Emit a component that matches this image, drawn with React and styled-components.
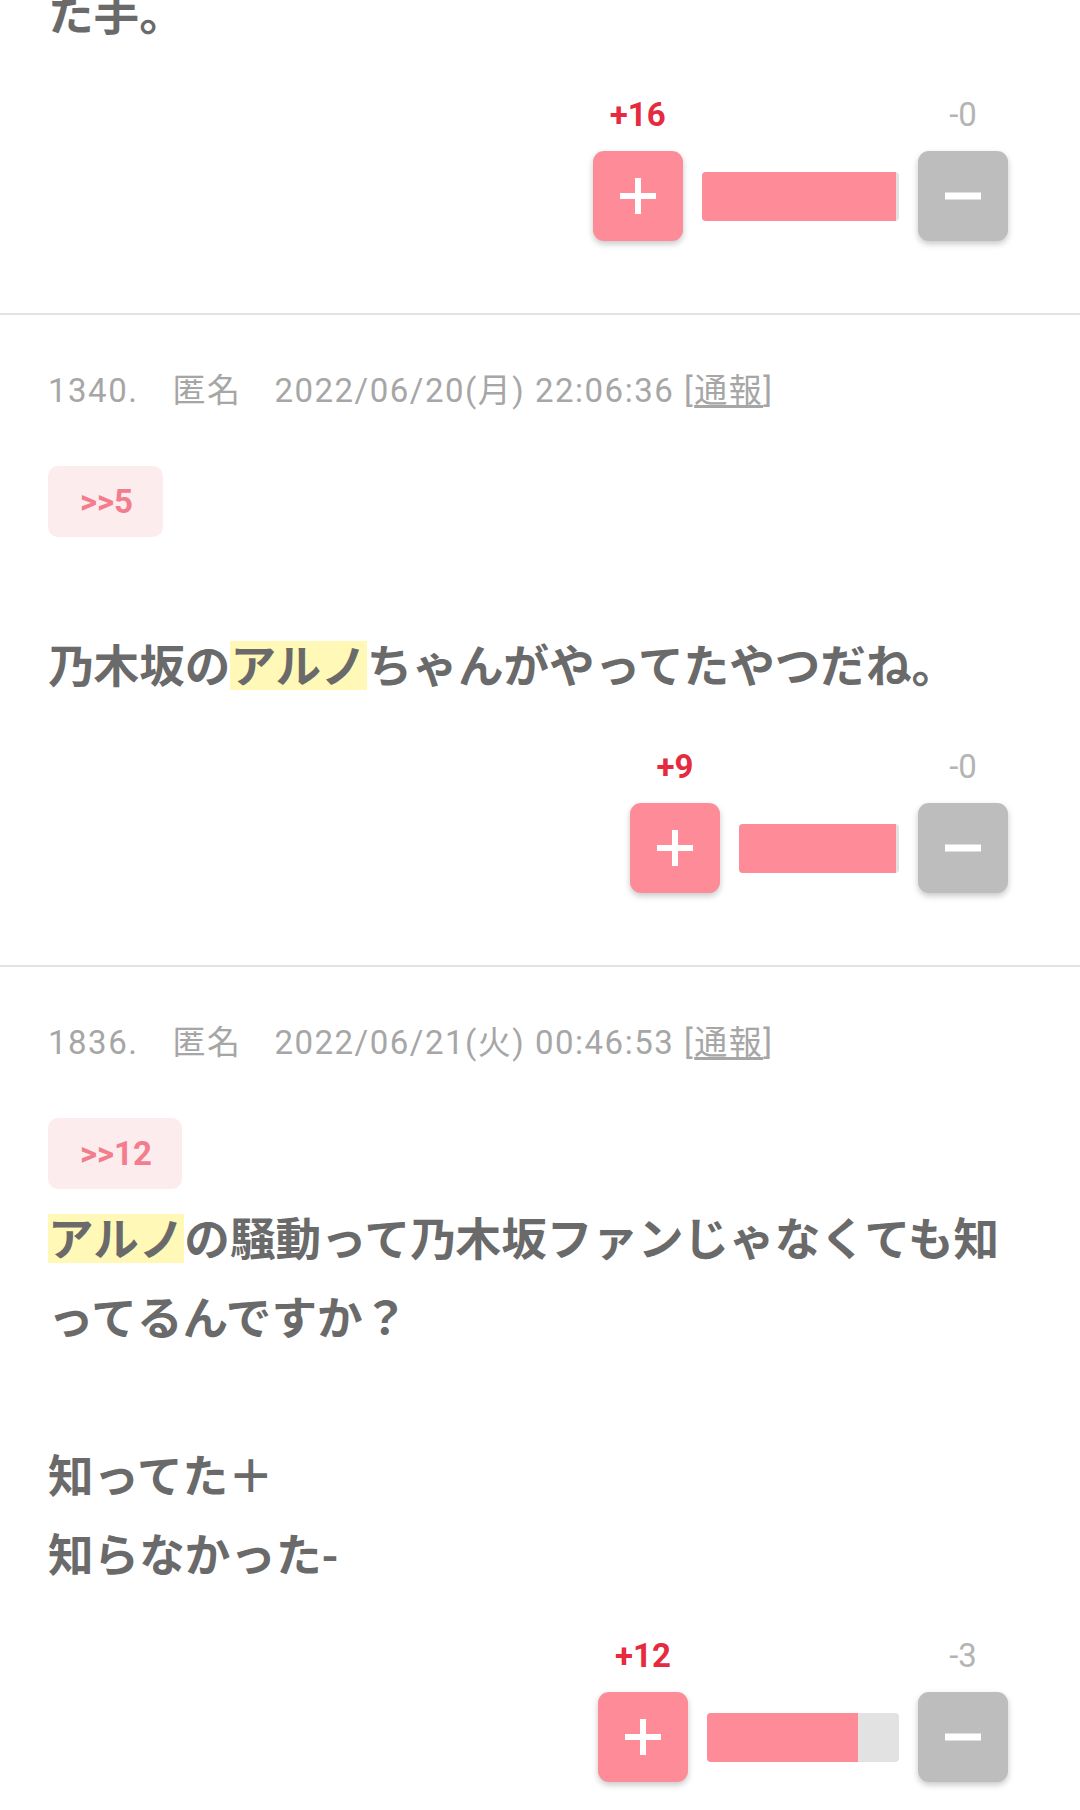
import React from "react";
import styled, { createGlobalStyle } from "styled-components";

const GlobalStyle = createGlobalStyle`
  html, body {
    margin: 0;
    padding: 0;
    background: #fff;
  }
  body {
    font-family: Roboto, "Noto Sans CJK JP", sans-serif;
  }
`;

const posts = [
  {
    id: "prev",
    partial: true,
    lines: ["た手。"],
    plus: 16,
    minus: 0,
  },
  {
    id: "1340",
    num: "1340.",
    date: "2022/06/20(月) 22:06:36",
    anchor: ">>5",
    lines: ["", "乃木坂の[アルノ]ちゃんがやってたやつだね。"],
    plus: 9,
    minus: 0,
  },
  {
    id: "1836",
    num: "1836.",
    date: "2022/06/21(火) 00:46:53",
    anchor: ">>12",
    lines: [
      "[アルノ]の騒動って乃木坂ファンじゃなくても知ってるんですか？",
      "",
      "知ってた＋",
      "知らなかった-",
    ],
    plus: 12,
    minus: 3,
  },
];

// "[...]" marks the highlighted word
const renderLine = (line) =>
  line.split(/(\[[^\]]+\])/).map((part, i) =>
    part.startsWith("[") ? <Mark key={i}>{part.slice(1, -1)}</Mark> : part
  );

const PlusIcon = () => (
  <svg width="38" height="38" viewBox="0 0 38 38">
    <path d="M19 1v36M1 19h36" stroke="#fff" strokeWidth="6" />
  </svg>
);

const MinusIcon = () => (
  <svg width="36" height="38" viewBox="0 0 36 38">
    <path d="M0 19h36" stroke="#fff" strokeWidth="7" />
  </svg>
);

const VoteBox = ({ plus, minus }) => {
  const total = plus + minus;
  const pct = total ? (plus / total) * 100 : 50;
  const barWidth = 112 + (total * 16) / 3;
  return (
    <Vote>
      <Count $up $col={1}>+{plus}</Count>
      <Count $col={3}>-{minus}</Count>
      <VoteButton $up>
        <PlusIcon />
      </VoteButton>
      <Bar style={{ width: barWidth }}>
        <Fill style={{ width: `calc(${pct}% - 3px)` }} />
      </Bar>
      <VoteButton>
        <MinusIcon />
      </VoteButton>
    </Vote>
  );
};

const App = () => {
  return (
    <>
      <GlobalStyle />
      <Thread>
        {posts.map((p) => (
          <Post key={p.id} $partial={p.partial}>
            {!p.partial && (
              <>
                <Meta>
                  <Num>{p.num}</Num>
                  <Name>匿名</Name>
                  <span>{p.date}</span> [<Report>通報</Report>]
                </Meta>
                <Anchor>{p.anchor}</Anchor>
              </>
            )}
            <Body>
              {p.lines.map((line, i) => (
                <Line key={i}>{renderLine(line)}</Line>
              ))}
            </Body>
            <VoteBox plus={p.plus} minus={p.minus} />
          </Post>
        ))}
      </Thread>
    </>
  );
};

export default App;

const Thread = styled.div`
  margin-top: -28px;
`;
const Post = styled.article`
  padding: ${(p) => (p.$partial ? "0" : "51px")} 48px 72px;
  border-bottom: 2px solid #e3e3e3;
`;
const Meta = styled.div`
  font-size: 33px;
  line-height: 50px;
  letter-spacing: 1.5px;
  color: #a6a6a6;
  white-space: nowrap;
`;
const Num = styled.span`
  margin-right: 34px;
`;
const Name = styled.span`
  margin-right: 33px;
`;
const Report = styled.span`
  text-decoration: underline;
  text-underline-offset: 3px;
`;
const Anchor = styled.div`
  display: inline-flex;
  align-items: center;
  height: 71px;
  margin: 50px 0 8px;
  padding: 0 30px 0 32px;
  border-radius: 10px;
  background: #fdecee;
  color: #f27d8c;
  font-size: 33px;
  font-weight: 700;
`;
const Body = styled.div`
  font-family: "Noto Sans CJK JP", sans-serif;
  font-size: 45.6px;
  font-weight: 700;
  line-height: 79px;
  color: #6a6a6a;
  line-break: loose;
`;
const Line = styled.p`
  margin: 0;
  min-height: 79px;
`;
const Mark = styled.span`
  background: linear-gradient(
    transparent 16%,
    #fff8b6 16%,
    #fff8b6 91%,
    transparent 91%
  );
`;
const Vote = styled.div`
  display: grid;
  grid-template-columns: 90px auto 90px;
  column-gap: 19px;
  row-gap: 16px;
  justify-content: end;
  align-items: center;
  margin-top: 44px;
  padding-right: 24px;
`;
const Count = styled.span`
  grid-column: ${(p) => p.$col};
  grid-row: 1;
  text-align: center;
  font-size: 33px;
  line-height: 40px;
  font-weight: ${(p) => (p.$up ? 700 : 400)};
  color: ${(p) => (p.$up ? "#e62a40" : "#b4b4b4")};
`;
const VoteButton = styled.button`
  grid-row: 2;
  display: flex;
  align-items: center;
  justify-content: center;
  width: 90px;
  height: 90px;
  padding: 0;
  border: none;
  border-radius: 11px;
  background: ${(p) => (p.$up ? "#fe8c98" : "#bdbdbd")};
  box-shadow: 0 3px 6px rgba(0, 0, 0, 0.22);
`;
const Bar = styled.div`
  grid-row: 2;
  height: 49px;
  border-radius: 4px;
  background: #e2e2e2;
  overflow: hidden;
`;
const Fill = styled.div`
  height: 100%;
  background: #fe8c98;
`;
